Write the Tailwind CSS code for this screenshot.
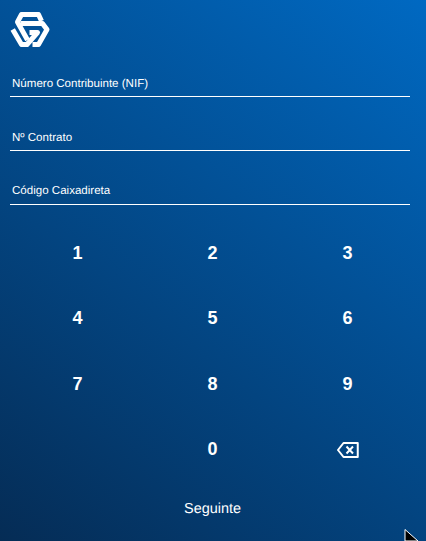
<!DOCTYPE html>
<html lang="en">
<head>
<meta charset="UTF-8" />
<title>Login</title>
<script src="https://cdn.jsdelivr.net/npm/@tailwindcss/browser@4"></script>
</head>
<body class="overflow-hidden">
<main class="relative w-[426px] h-[541px] overflow-hidden bg-[linear-gradient(38deg,#052c55,#0069c2)] text-white font-['Liberation_Sans',Arial,sans-serif] [text-rendering:geometricPrecision]">
    <!-- Logo -->
    <header class="pl-[10px] pt-[11px] h-[48px]">
        <svg width="40" height="37" viewBox="0 0 40 37" fill="none" stroke="#fff" stroke-width="5" stroke-linejoin="round" class="block">
            <path d="M31.500 10 28.500 3.500H11.500L7.500 11 17.500 29" />
            <path d="M10.500 12.500H32.500L37 18.500 28.500 33.500H22.500" />
            <path d="M2.700 18.500 11.500 33.500H17L27.500 21.500H19.500" />
        </svg>
    </header>

    <!-- Fields -->
    <section class="flex flex-col w-[400px] ml-[10px] text-[11.550px] leading-[15px]">
        <div class="h-[49px] pb-[4px] pl-[2px] flex items-end border-b border-white">Número Contribuinte (NIF)</div>
        <div class="h-[54px] pb-[4px] pl-[2px] flex items-end border-b border-white">Nº Contrato</div>
        <div class="h-[54px] pb-[5px] pl-[2px] flex items-end border-b border-white">Código Caixadireta</div>
    </section>

    <!-- Keypad -->
    <section class="grid grid-cols-3 w-[405px] ml-[10px] mt-[15.600px] text-[18px] font-bold">
        <button class="h-[65.500px]">1</button>
        <button class="h-[65.500px]">2</button>
        <button class="h-[65.500px]">3</button>
        <button class="h-[65.500px]">4</button>
        <button class="h-[65.500px]">5</button>
        <button class="h-[65.500px]">6</button>
        <button class="h-[65.500px]">7</button>
        <button class="h-[65.500px]">8</button>
        <button class="h-[65.500px]">9</button>
        <div class="h-[65.500px]"></div>
        <button class="h-[65.500px]">0</button>
        <button class="h-[65.500px] flex items-center justify-center">
            <svg width="22" height="16" viewBox="0 0 22 16" fill="none" stroke="#fff" stroke-width="2" stroke-linejoin="round">
                <path d="M6.500 1H20.750V15H6.500L1 8Z" />
                <path d="M9.500 4.500 16 11.500M16 4.500 9.500 11.500" />
            </svg>
        </button>
    </section>

    <div class="mt-[17.400px] text-center text-[14.440px] leading-[18px] w-[425px]">Seguinte</div>

    <!-- Mouse pointer over the page -->
    <svg class="absolute left-[404px] top-[529px]" width="16" height="12" viewBox="0 0 16 12">
        <path d="M1 0.500V12H14L1 0.500Z" fill="#000" stroke="#fff" stroke-width="1"/>
    </svg>
</main>
</body>
</html>
